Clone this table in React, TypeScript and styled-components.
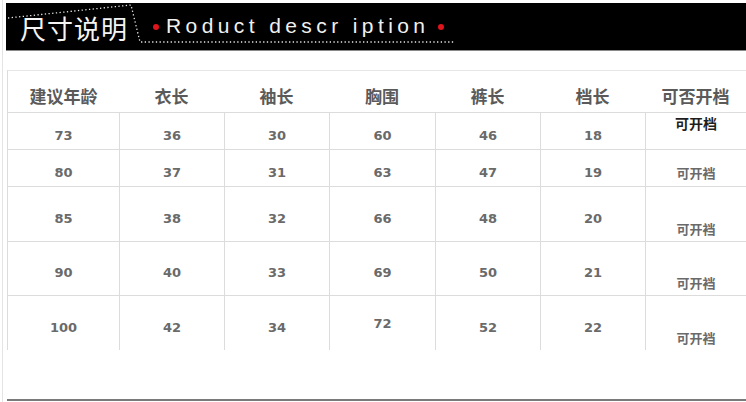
import React from 'react';
import styled, { createGlobalStyle } from 'styled-components';

const GlobalStyle = createGlobalStyle`
  html, body {
    margin: 0;
    padding: 0;
    background: #fff;
  }
`;

const Page = styled.div`
  width: 741px;
  height: 402px;
  margin-left: 2px;
  padding-left: 3px;
  border-left: 1px solid #e4e4e4;
  overflow: hidden;
  display: flex;
  flex-direction: column;
`;

const Banner = styled.div`
  position: relative;
  margin-top: 3px;
  height: 47px;
  background: #000;
  border-bottom: 1px solid #8a8a8a;
  display: flex;
  align-items: center;
  padding-left: 14px;
`;

const Dots = styled.svg`
  position: absolute;
  left: 0;
  top: 0;
  pointer-events: none;
`;

const Title = styled.span`
  font-family: 'Noto Sans CJK SC', 'Noto Sans', sans-serif;
  font-size: 26px;
  font-weight: 400;
  color: #f4f4f4;
  letter-spacing: 1px;
  line-height: 1;
  margin: 3px 25px 0 0;
`;

const RedDot = styled.span`
  width: 6px;
  height: 6px;
  border-radius: 50%;
  background: #e0141c;
  flex: none;
`;

const Subtitle = styled.span`
  font-family: 'Liberation Sans', Arial, sans-serif;
  font-size: 21px;
  color: #f0f0f0;
  letter-spacing: 4.4px;
  line-height: 1;
  margin: -3px 9px 0 7px;
`;

const Table = styled.div`
  margin-top: 19px;
  margin-left: 1px;
  display: grid;
  grid-template-columns: 111px 105px 105px 106px 105px 105px 101px;
  grid-template-rows: 42px 37px 37px 55px 54px 54px;
  border-top: 1px solid #e6e6e6;
  border-left: 1px solid #dcdcdc;
`;

const Head = styled.div`
  display: flex;
  align-items: center;
  justify-content: center;
  padding-top: 8px;
  border-bottom: 1px solid #dcdcdc;
  font-family: 'Noto Sans CJK SC', 'Noto Sans', sans-serif;
  font-size: 17px;
  font-weight: 700;
  color: #5a5a5a;
`;

type Align = 'mid' | 'center' | 'top' | 'bottom';

const Cell = styled.div<{ $align: Align; $first: boolean; $last: boolean; $strong?: boolean; $cjk?: boolean }>`
  display: flex;
  justify-content: center;
  align-items: ${(p) => (p.$align === 'top' ? 'flex-start' : p.$align === 'bottom' ? 'flex-end' : 'center')};
  padding-top: ${(p) => (p.$align === 'mid' ? '8px' : p.$align === 'top' ? '3px' : '0')};
  padding-bottom: ${(p) => (p.$align === 'bottom' ? '6px' : '0')};
  box-sizing: border-box;
  border-left: ${(p) => (p.$first ? 'none' : '1px solid #dcdcdc')};
  border-bottom: ${(p) => (p.$last ? 'none' : '1px solid #dcdcdc')};
  font-family: ${(p) =>
    p.$cjk ? "'Noto Sans CJK SC', 'Noto Sans', sans-serif" : "'DejaVu Sans', Verdana, sans-serif"};
  font-size: ${(p) => (p.$strong ? '14px' : '13px')};
  font-weight: 700;
  color: ${(p) => (p.$strong ? '#1e1e1e' : '#6a6a6a')};
  line-height: 1;
`;

const Spacer = styled.div`
  flex: 1;
`;

const BottomRule = styled.div`
  height: 2px;
  margin: 0 0 1px 1px;
  background: #7a7a7a;
`;

const heads = ['建议年龄', '衣长', '袖长', '胸围', '裤长', '档长', '可否开档'];

const rows: string[][] = [
  ['73', '36', '30', '60', '46', '18', '可开档'],
  ['80', '37', '31', '63', '47', '19', '可开裆'],
  ['85', '38', '32', '66', '48', '20', '可开裆'],
  ['90', '40', '33', '69', '50', '21', '可开裆'],
  ['100', '42', '34', '72', '52', '22', '可开裆'],
];

const alignFor = (r: number, c: number): Align => {
  if (c === 6) {
    if (r === 0) return 'top';
    if (r === 1) return 'mid';
    return 'bottom';
  }
  if (r === 4 && c === 3) return 'center';
  return 'mid';
};

const App: React.FC = () => {
  return (
    <>
      <GlobalStyle />
      <Page>
        <Banner>
          <Dots width="741" height="47" viewBox="0 0 741 47">
            <g stroke="#e8e8e8" strokeWidth="1.3" strokeDasharray="1.3 2.4" fill="none">
              <polyline points="2,15 125,2 134,39 448,39" />
            </g>
          </Dots>
          <Title>尺寸说明</Title>
          <RedDot />
          <Subtitle>Roduct descr iption</Subtitle>
          <RedDot />
        </Banner>
        <Table>
          {heads.map((h) => (
            <Head key={h}>{h}</Head>
          ))}
          {rows.map((row, r) =>
            row.map((v, c) => (
              <Cell
                key={`${r}-${c}`}
                $align={alignFor(r, c)}
                $first={c === 0}
                $last={r === rows.length - 1}
                $strong={c === 6 && r === 0}
                $cjk={c === 6}
              >
                {v}
              </Cell>
            ))
          )}
        </Table>
        <Spacer />
        <BottomRule />
      </Page>
    </>
  );
};

export default App;
